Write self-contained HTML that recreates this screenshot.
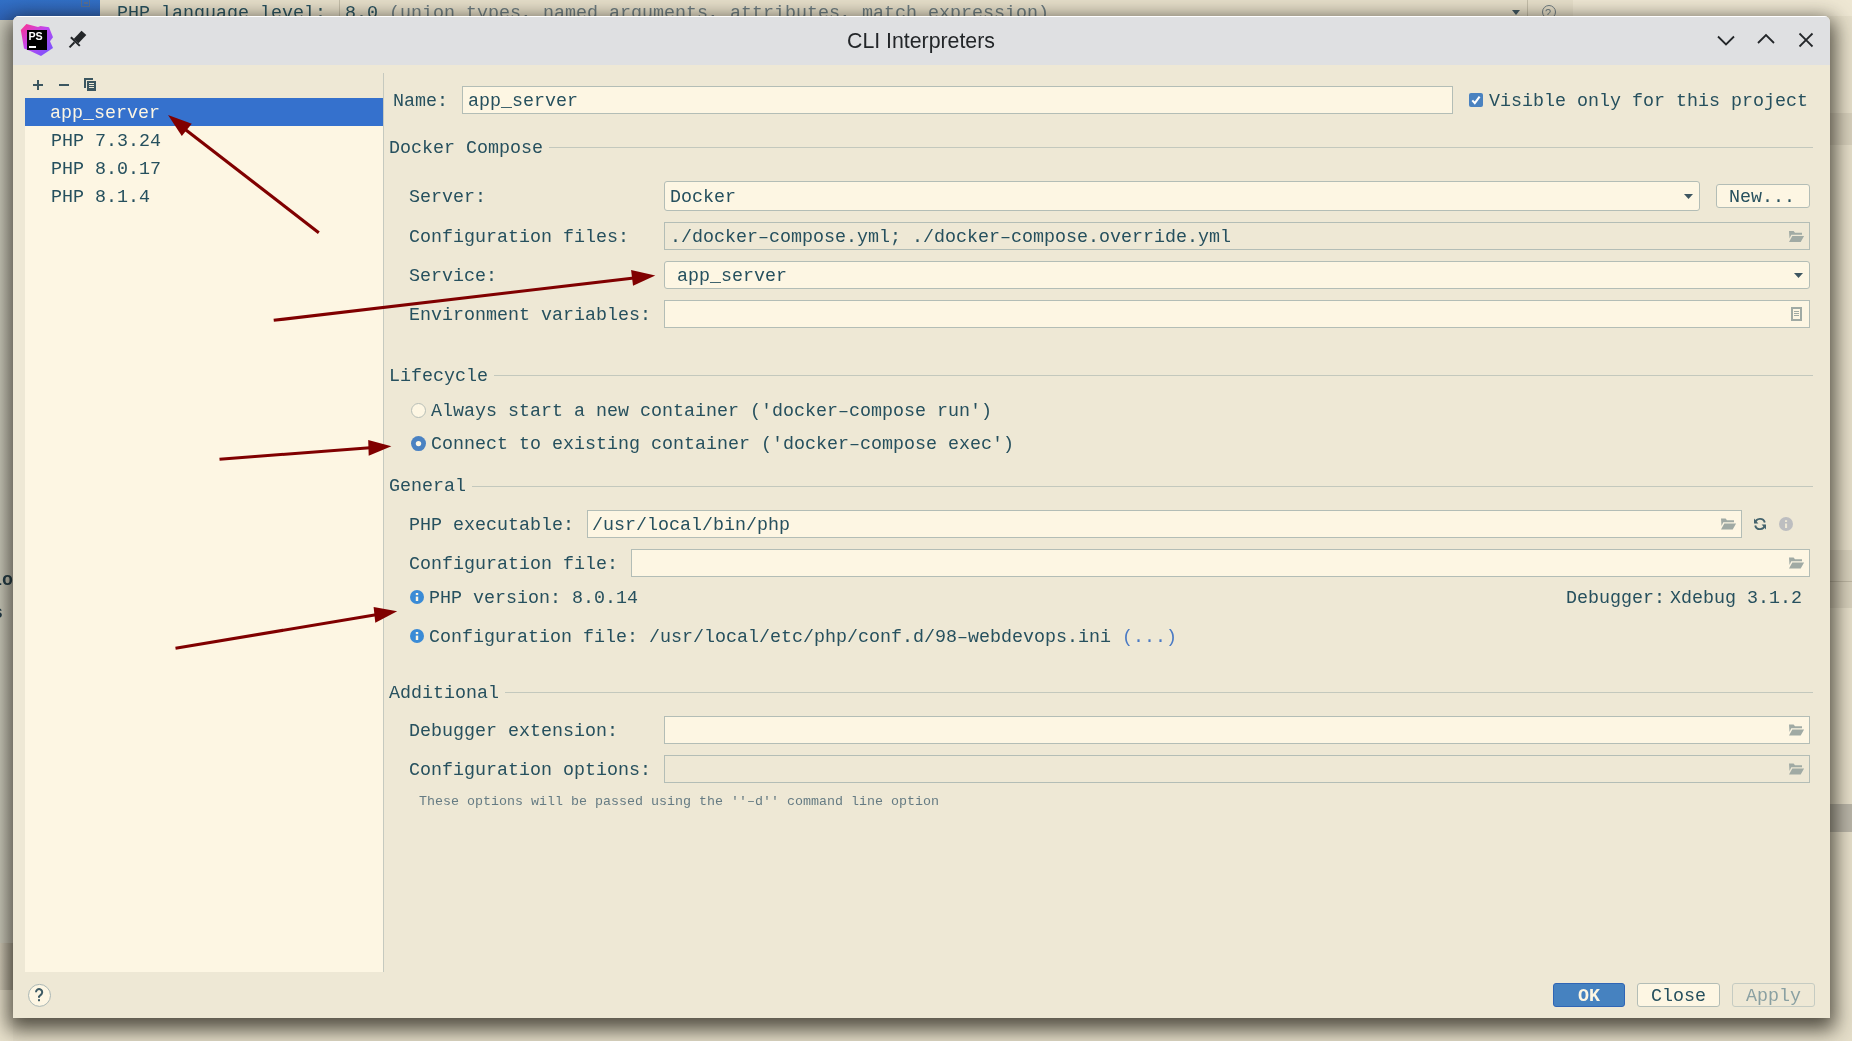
<!DOCTYPE html>
<html><head><meta charset="utf-8">
<style>
html,body{margin:0;padding:0;width:1852px;height:1041px;overflow:hidden;background:#e9e2ce;}
*{box-sizing:border-box;}
.a{position:absolute;}
.t{position:absolute;will-change:transform;height:0;line-height:0;white-space:pre;font-family:"Liberation Mono",monospace;font-size:18.33px;color:#26505e;}
.s{font-size:13.33px;}
.fld{position:absolute;background:#fdf6e3;border:1px solid #b3bdb6;}
.dis{background:#eee8d5;}
.sep{position:absolute;height:1px;background:#c3c8bd;}
</style></head><body>
<!-- background IDE -->
<div class="a" style="left:0;top:0;width:100px;height:20px;background:linear-gradient(to bottom,#3270c6,#2d62b8)"></div>
<div class="a" style="left:81px;top:0;width:9px;height:7px;border:1px solid #5a6f90;border-top:none"></div>
<div class="a" style="left:84px;top:2px;width:4px;height:2px;background:#5a6f90"></div>
<div class="a" style="left:100px;top:0;width:1473px;height:16px;background:#e6dfca"></div>
<div class="a" style="left:1573px;top:0;width:279px;height:16px;background:#eee7d3"></div>
<div class="a" style="left:339px;top:0;width:1px;height:16px;background:#c4bea9"></div>
<div class="a" style="left:1527px;top:0;width:1px;height:16px;background:#c4bea9"></div>
<div class="t" style="left:117px;top:14px">PHP language level:</div>
<div class="t" style="left:345px;top:14px">8.0 <span style="color:#6b7b80">(union types, named arguments, attributes, match expression)</span></div>
<div class="a" style="left:1512px;top:10px;width:0;height:0;border-left:4.5px solid transparent;border-right:4.5px solid transparent;border-top:5px solid #3d5560"></div>
<div class="a" style="left:1542px;top:5px;width:14px;height:14px;border-radius:50%;border:1px solid #6d7b80"></div>
<div class="t" style="left:1545px;top:13px;font-family:'Liberation Sans',sans-serif;font-size:11px;color:#6d7b80">?</div>
<div class="a" style="left:0;top:20px;width:13px;height:923px;background:linear-gradient(to right,#cfcebf,#d6d3c6)"></div>
<div class="a" style="left:0;top:943px;width:13px;height:47px;background:linear-gradient(to right,#d6cfbd,#b9b2a2)"></div>
<div class="t" style="left:-9px;top:581px;font-weight:bold;color:#1f3a48">lo</div>
<div class="t" style="left:-8px;top:614px;font-weight:bold;color:#1f3a48">s</div>
<div class="a" style="left:0;top:990px;width:13px;height:51px;background:#eae3ce"></div>
<div class="a" style="left:1830px;top:16px;width:22px;height:1025px;background:#e6dfca"></div>
<div class="a" style="left:1830px;top:113px;width:22px;height:32px;background:#d8d1bd"></div>
<div class="a" style="left:1830px;top:550px;width:22px;height:58px;background:#d8d1bd"></div>
<div class="a" style="left:1830px;top:581px;width:22px;height:1px;background:#bdb6a3"></div>
<div class="a" style="left:1830px;top:804px;width:22px;height:28px;background:#b9b5a8"></div>
<div class="a" style="left:13px;top:1018px;width:1839px;height:23px;background:#e6dfca"></div>

<!-- dialog -->
<div class="a" id="dlg" style="left:13px;top:16px;width:1817px;height:1002px;background:#eee8d5;border-radius:6px 6px 0 0;box-shadow:0 7px 20px 5px rgba(25,22,14,0.72)">
  <div class="a" style="left:0;top:0;width:1817px;height:1002px;border-radius:6px 6px 0 0;overflow:hidden">
  <div class="a" style="left:0;top:0;width:1817px;height:49px;background:#dfe0e2;border-top:1px solid #fff"></div>
</div></div>

<!-- title -->
<div class="t" style="left:847px;top:41px;font-family:'Liberation Sans',sans-serif;font-size:21.3px;color:#232629">CLI Interpreters</div>

<!-- list -->
<div class="a" style="left:25px;top:98px;width:358px;height:874px;background:#fdf6e3"></div>
<div class="a" style="left:25px;top:98px;width:358px;height:28px;background:#3571cd"></div>
<div class="a" style="left:383px;top:73px;width:1px;height:899px;background:#c5c9bf"></div>
<div class="t" style="left:50px;top:114px;color:#fdf6e3">app_server</div>
<div class="t" style="left:50.5px;top:142px">PHP 7.3.24</div>
<div class="t" style="left:50.5px;top:170px">PHP 8.0.17</div>
<div class="t" style="left:50.5px;top:198px">PHP 8.1.4</div>

<!-- name row -->
<div class="t" style="left:393px;top:102px">Name:</div>
<div class="fld" style="left:462px;top:86px;width:991px;height:28px"></div>
<div class="t" style="left:468px;top:102px">app_server</div>
<div class="a" style="left:1469px;top:93px;width:14px;height:14px;background:#4a82c0;border-radius:2px"></div>
<div class="t" style="left:1489px;top:102px">Visible only for this project</div>

<!-- Docker compose -->
<div class="t" style="left:389px;top:149px">Docker Compose</div>
<div class="sep" style="left:549px;top:147px;width:1264px"></div>
<div class="t" style="left:409px;top:198px">Server:</div>
<div class="fld" style="left:664px;top:181px;width:1036px;height:30px;border-radius:3px"></div>
<div class="t" style="left:670px;top:198px">Docker</div>
<div class="fld" style="left:1716px;top:184px;width:94px;height:24px;border-radius:3px"></div>
<div class="t" style="left:1729px;top:198px">New...</div>
<div class="t" style="left:409px;top:238px">Configuration files:</div>
<div class="fld dis" style="left:664px;top:222px;width:1146px;height:28px"></div>
<div class="t" style="left:670px;top:238px">./docker–compose.yml; ./docker–compose.override.yml</div>
<div class="t" style="left:409px;top:277px">Service:</div>
<div class="fld" style="left:664px;top:261px;width:1146px;height:28px;border-radius:3px"></div>
<div class="t" style="left:677px;top:277px">app_server</div>
<div class="t" style="left:409px;top:316px">Environment variables:</div>
<div class="fld" style="left:664px;top:300px;width:1146px;height:28px"></div>

<!-- Lifecycle -->
<div class="t" style="left:389px;top:377px">Lifecycle</div>
<div class="sep" style="left:494px;top:375px;width:1319px"></div>
<div class="t" style="left:431px;top:412px">Always start a new container ('docker–compose run')</div>
<div class="t" style="left:431px;top:445px">Connect to existing container ('docker–compose exec')</div>

<!-- General -->
<div class="t" style="left:389px;top:487px">General</div>
<div class="sep" style="left:472px;top:486px;width:1341px"></div>
<div class="t" style="left:409px;top:526px">PHP executable:</div>
<div class="fld" style="left:587px;top:510px;width:1155px;height:28px"></div>
<div class="t" style="left:592px;top:526px">/usr/local/bin/php</div>
<div class="t" style="left:409px;top:565px">Configuration file:</div>
<div class="fld" style="left:631px;top:549px;width:1179px;height:28px"></div>
<div class="t" style="left:429px;top:599px">PHP version: 8.0.14</div>
<div class="t" style="left:1566px;top:599px">Debugger:</div>
<div class="t" style="left:1670px;top:599px">Xdebug 3.1.2</div>
<div class="t" style="left:429px;top:638px">Configuration file: /usr/local/etc/php/conf.d/98–webdevops.ini <span style="color:#4a7ac4">(...)</span></div>

<!-- Additional -->
<div class="t" style="left:389px;top:694px">Additional</div>
<div class="sep" style="left:505px;top:692px;width:1308px"></div>
<div class="t" style="left:409px;top:732px">Debugger extension:</div>
<div class="fld" style="left:664px;top:716px;width:1146px;height:28px"></div>
<div class="t" style="left:409px;top:771px">Configuration options:</div>
<div class="fld dis" style="left:664px;top:755px;width:1146px;height:28px"></div>
<div class="t s" style="left:419px;top:802px;color:#657b83">These options will be passed using the ''–d'' command line option</div>

<!-- bottom -->
<div class="a" style="left:1553px;top:983px;width:72px;height:24px;border-radius:3px;background:#4682c0;border:1px solid #2f65b5"></div>
<div class="t" style="left:1578px;top:997px;color:#fdf6e3;font-weight:bold">OK</div>
<div class="fld" style="left:1637px;top:983px;width:83px;height:24px;border-radius:3px"></div>
<div class="t" style="left:1651px;top:997px">Close</div>
<div class="fld dis" style="left:1732px;top:983px;width:83px;height:24px;border-radius:3px;border-color:#c5cbc2"></div>
<div class="t" style="left:1746px;top:997px;color:#8aa0a2">Apply</div>


<!-- icon overlay -->
<svg class="a" style="left:0;top:0" width="1852" height="1041" viewBox="0 0 1852 1041">
<defs>
<linearGradient id="psg" x1="0" y1="0" x2="1" y2="1">
<stop offset="0" stop-color="#ff318c"/><stop offset="0.45" stop-color="#c046f0"/><stop offset="1" stop-color="#6b57ff"/>
</linearGradient>
</defs>
<!-- PS logo -->
<polygon points="20.8,30 26.4,24 38,27 40.5,26 49,27.3 53,37.3 50,41.2 53,48.1 41,56 30.3,51 24,48.5" fill="url(#psg)"/>
<rect x="27" y="30" width="20" height="20" fill="#000"/>
<text x="28.4" y="40.2" font-family="Liberation Sans" font-weight="bold" font-size="10.7" fill="#fff" style="will-change:transform">PS</text>
<rect x="29" y="46" width="7" height="2" fill="#fff"/>
<!-- pin -->
<g fill="#232629" stroke="#232629">
<polygon points="73.7,39 81.5,30.8 86.3,35.1 78.5,43.3" stroke="none"/>
<line x1="70.9" y1="37.3" x2="79.8" y2="45.9" stroke-width="2"/>
<line x1="74.5" y1="42.2" x2="69.5" y2="47.4" stroke-width="2"/>
</g>
<!-- titlebar controls -->
<g fill="none" stroke="#232629" stroke-width="1.8">
<polyline points="1718,36.5 1726,44.5 1734,36.5"/>
<polyline points="1758,43 1766,35 1774,43"/>
<line x1="1799.5" y1="33.5" x2="1812.5" y2="46.5"/>
<line x1="1812.5" y1="33.5" x2="1799.5" y2="46.5"/>
</g>
<!-- toolbar -->
<g fill="#3b5660">
<rect x="33" y="84" width="10" height="2"/><rect x="37" y="80" width="2" height="10"/>
<rect x="59" y="84" width="10" height="2"/>
<rect x="84" y="78" width="9" height="2"/><rect x="84" y="78" width="2" height="10"/>
<rect x="87" y="81" width="9" height="10"/>
</g>
<g fill="#eee8d5"><rect x="89" y="83" width="5" height="1"/><rect x="89" y="85" width="5" height="1"/><rect x="89" y="87" width="5" height="1"/></g>
<!-- checkbox tick -->
<polyline points="1472.3,100.4 1474.8,103.2 1479.6,96.6" fill="none" stroke="#fff" stroke-width="2.1"/>
<!-- combobox arrows -->
<polygon points="1684,194 1693,194 1688.5,199" fill="#3d5560"/>
<polygon points="1794,273 1803,273 1798.5,278" fill="#3d5560"/>
<!-- folders -->
<g fill="#a0aaa4">
<path id="fold" d="M1789,231 H1793.6 L1795,232.8 H1802 V234.8 H1791.3 L1789.5,238.5 Z M1792.3,236.1 H1804.1 L1800.7,241.9 H1789 Z"/>
<use href="#fold" x="-68" y="287.5"/>
<use href="#fold" x="0" y="326.5"/>
<use href="#fold" x="0" y="493.5"/>
<use href="#fold" x="0" y="532.5"/>
</g>
<!-- env doc icon -->
<rect x="1792" y="308" width="9" height="12" fill="none" stroke="#a0aaa4" stroke-width="2"/>
<g stroke="#a0aaa4" stroke-width="1"><line x1="1794" y1="311.5" x2="1799" y2="311.5"/><line x1="1794" y1="313.5" x2="1799" y2="313.5"/><line x1="1794" y1="315.5" x2="1799" y2="315.5"/></g>
<!-- refresh -->
<g fill="none" stroke="#44636d" stroke-width="1.9">
<path d="M1755.2,523 A4.9,4.9 0 0 1 1764.8,522.6"/>
<path d="M1764.8,525 A4.9,4.9 0 0 1 1755.2,525.4"/>
</g>
<polygon points="1754,518.6 1754,523.4 1758.4,523.4" fill="#44636d"/>
<polygon points="1766,529.6 1766,524.6 1761.6,524.6" fill="#44636d"/>
<!-- grey info -->
<circle cx="1786" cy="524" r="7" fill="#bdbec0"/>
<rect x="1785" y="520.2" width="2.1" height="1.8" fill="#eee8d5"/><rect x="1785" y="523.5" width="2.1" height="4.5" fill="#eee8d5"/>
<!-- blue info icons -->
<g><circle cx="417" cy="597" r="7" fill="#3a8bd6"/><rect x="415.8" y="593" width="2.4" height="2.1" fill="#fdf6e3"/><rect x="415.8" y="596.6" width="2.4" height="4.4" fill="#fdf6e3"/></g>
<g><circle cx="417" cy="636" r="7" fill="#3a8bd6"/><rect x="415.8" y="632" width="2.4" height="2.1" fill="#fdf6e3"/><rect x="415.8" y="635.6" width="2.4" height="4.4" fill="#fdf6e3"/></g>
<!-- radios -->
<circle cx="418.5" cy="410.5" r="7" fill="#fdf6e3" stroke="#b6bdb6" stroke-width="1"/>
<circle cx="418.5" cy="443.6" r="7.5" fill="#4a82c2"/>
<circle cx="418.5" cy="443.6" r="2.7" fill="#fdf6e3"/>
<!-- help -->
<circle cx="39.5" cy="995.4" r="11" fill="#fdf6e3" stroke="#a9b6b4" stroke-width="1"/>
<path d="M36,992.3 A3.1,3.1 0 1 1 41.6,994 L39,996.6 V997.8" fill="none" stroke="#3d5a64" stroke-width="2"/>
<rect x="38" y="999.2" width="2" height="2" fill="#3d5a64"/>
<!-- red arrows -->
<g stroke="#800000" stroke-width="3.1" fill="#800000">
<line x1="318.8" y1="232.7" x2="184" y2="128.5"/>
<polygon points="168,115.1 191.8,123.8 181.8,135.9" stroke="none"/>
<line x1="273.7" y1="320.3" x2="634" y2="278"/>
<polygon points="655.3,275.4 631.05,270.06 633.05,285.7" stroke="none"/>
<line x1="219.5" y1="459.2" x2="370" y2="447.8"/>
<polygon points="391.4,446.2 368.2,439.9 368.7,455.7" stroke="none"/>
<line x1="175.5" y1="648.3" x2="376" y2="614.8"/>
<polygon points="397.2,611.2 373.6,607.1 375.3,622.7" stroke="none"/>
</g>
</svg>
</body></html>
